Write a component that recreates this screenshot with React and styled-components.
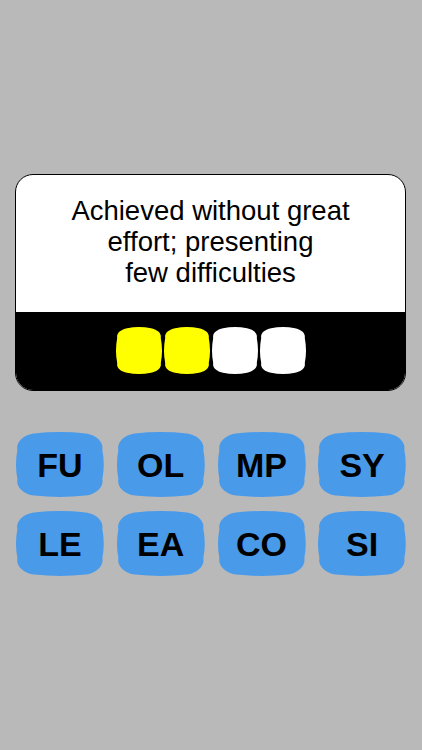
import React from "react";
import styled, { createGlobalStyle } from "styled-components";

const GlobalStyle = createGlobalStyle`
  html, body {
    margin: 0;
    padding: 0;
    background: #b9b9b9;
  }
  body {
    font-family: "Liberation Sans", Arial, Helvetica, sans-serif;
  }
`;

const Screen = styled.div`
  width: 422px;
  height: 750px;
  box-sizing: border-box;
  padding: 174px 16px 0 15px;
  display: flex;
  flex-direction: column;
  gap: 41px;
`;

const Card = styled.div`
  border: 1.5px solid #000;
  border-radius: 18px;
  overflow: hidden;
  background: #fff;
  display: flex;
  flex-direction: column;
`;

const Clue = styled.div`
  height: 137px;
  box-sizing: border-box;
  padding-top: 20px;
  text-align: center;
  font-size: 27.5px;
  line-height: 31px;
  color: #000;
`;

const Progress = styled.div`
  background: #000;
  height: 78px;
  display: flex;
  justify-content: center;
  align-items: center;
  gap: 2px;
  padding-bottom: 1px;
  box-sizing: border-box;
`;

// a rounded rectangle whose sides bow outward a little, like an old TV screen
function cushionPath(w, h, r, b) {
  const unit = (x, y) => {
    const l = Math.hypot(x, y);
    return [x / l, y / l];
  };
  const k = r * 0.5;
  // tangent where the top edge meets a corner, and where a side edge leaves one
  const [tx, ty] = unit(w / 2 - r, 2 * b);
  const [sx, sy] = unit(2 * b, h / 2 - r);
  const f = (n) => n.toFixed(2);
  return [
    `M ${f(r)} ${f(b)}`,
    `Q ${f(w / 2)} ${f(-b)} ${f(w - r)} ${f(b)}`,
    `C ${f(w - r + k * tx)} ${f(b + k * ty)} ${f(w - b + k * sx)} ${f(r - k * sy)} ${f(w - b)} ${f(r)}`,
    `Q ${f(w + b)} ${f(h / 2)} ${f(w - b)} ${f(h - r)}`,
    `C ${f(w - b + k * sx)} ${f(h - r + k * sy)} ${f(w - r + k * tx)} ${f(h - b - k * ty)} ${f(w - r)} ${f(h - b)}`,
    `Q ${f(w / 2)} ${f(h + b)} ${f(r)} ${f(h - b)}`,
    `C ${f(r - k * tx)} ${f(h - b - k * ty)} ${f(b - k * sx)} ${f(h - r + k * sy)} ${f(b)} ${f(h - r)}`,
    `Q ${f(-b)} ${f(h / 2)} ${f(b)} ${f(r)}`,
    `C ${f(b - k * sx)} ${f(r - k * sy)} ${f(r - k * tx)} ${f(b + k * ty)} ${f(r)} ${f(b)}`,
    "Z",
  ].join(" ");
}

const Shape = styled.svg`
  grid-area: 1 / 1;
  width: 100%;
  height: 100%;
  display: block;
  overflow: visible;
`;

function Cushion({ w, h, r, b, fill }) {
  return (
    <Shape viewBox={`0 0 ${w} ${h}`} preserveAspectRatio="none">
      <path d={cushionPath(w, h, r, b)} fill={fill} />
    </Shape>
  );
}

const Tile = styled.div`
  width: 46px;
  height: 47px;
  display: grid;
`;

const Keys = styled.div`
  display: grid;
  grid-template-columns: repeat(4, 1fr);
  column-gap: 13px;
  row-gap: 14px;
  padding-left: 1px;
`;

const Key = styled.button`
  height: 65px;
  padding: 0;
  border: none;
  background: none;
  display: grid;
  cursor: pointer;
`;

const KeyLabel = styled.span`
  grid-area: 1 / 1;
  align-self: center;
  justify-self: center;
  font-family: "Liberation Sans", Arial, sans-serif;
  font-weight: 700;
  font-size: 34px;
  color: #000;
  padding-top: 1px;
`;

const filled = 2;
const letters = ["FU", "OL", "MP", "SY", "LE", "EA", "CO", "SI"];

export default function App() {
  return (
    <>
      <GlobalStyle />
      <Screen>
        <Card>
          <Clue>
            Achieved without great
            <br />
            effort; presenting
            <br />
            few difficulties
          </Clue>
          <Progress>
            {[0, 1, 2, 3].map((i) => (
              <Tile key={i}>
                <Cushion
                  w={46}
                  h={47}
                  r={11}
                  b={1.2}
                  fill={i < filled ? "#ffff00" : "#ffffff"}
                />
              </Tile>
            ))}
          </Progress>
        </Card>
        <Keys>
          {letters.map((l) => (
            <Key key={l}>
              <Cushion w={88} h={65} r={18} b={1.4} fill="#4a9aea" />
              <KeyLabel>{l}</KeyLabel>
            </Key>
          ))}
        </Keys>
      </Screen>
    </>
  );
}
